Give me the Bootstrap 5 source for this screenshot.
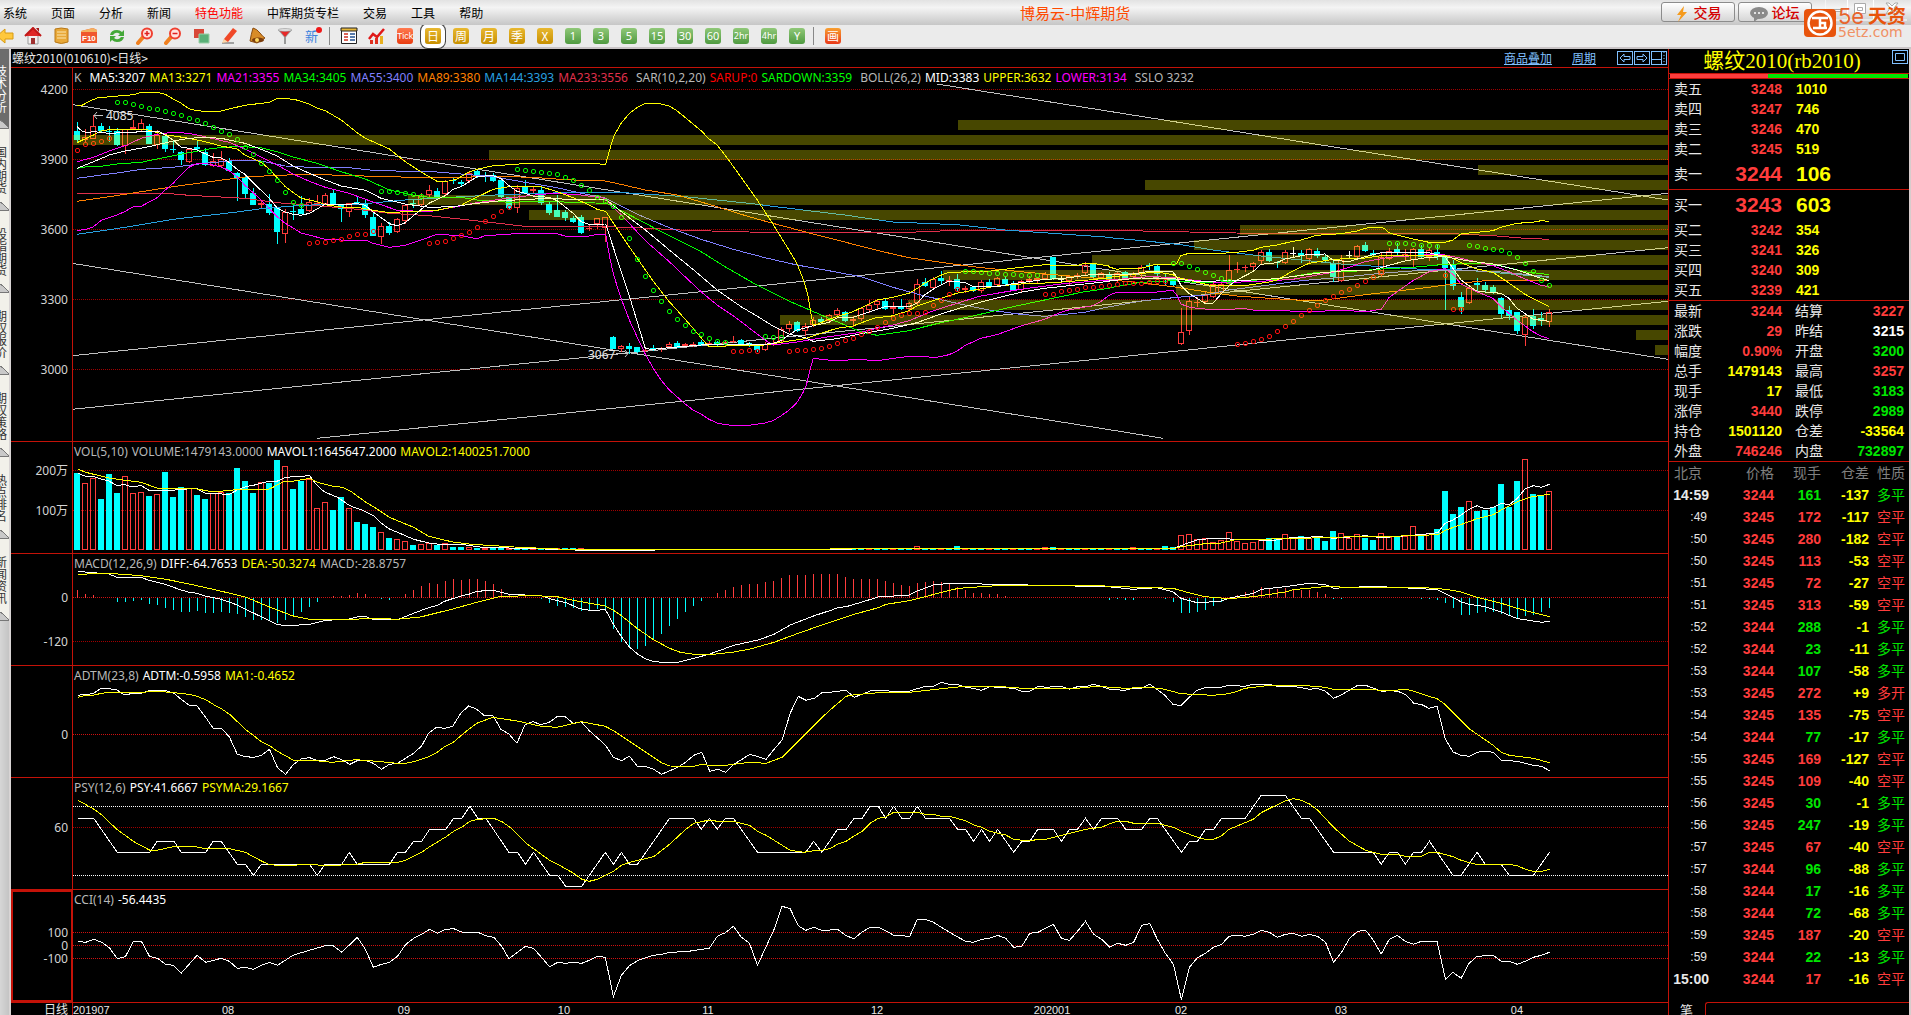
<!DOCTYPE html>
<html lang="zh-CN">
<head>
<meta charset="utf-8">
<meta name="viewport" content="width=device-width, initial-scale=1">
<title>博易云-中辉期货</title>
<link href="https://cdn.jsdelivr.net/npm/bootstrap@5.3.0/dist/css/bootstrap.min.css" rel="stylesheet">
<script src="https://cdn.jsdelivr.net/npm/bootstrap@5.3.0/dist/js/bootstrap.bundle.min.js"></script>
<style>
:root{--rule:#c41208;--up:#ff3c3c;--dn:#00e600;--cn:"Noto Sans CJK SC",sans-serif;--lat:"Noto Sans","Noto Sans CJK SC",sans-serif}
body{background:#000;color:#e8e8e8;font:12px/16px var(--cn);overflow:hidden}
button{font-family:inherit}
.menubar{height:25px;background:linear-gradient(#e2e2e2,#f4f4f4 30%,#e4e4e4 55%,#c6c6c6);color:#000;position:relative}
.menubar nav{gap:24px;padding-left:3px}
.menubar nav a{color:#000;text-decoration:none;line-height:26px;white-space:nowrap}
.menubar nav a.hot{color:#f00}
.app-name{left:1020px;top:2px;color:#ff4a00;font-size:15px;line-height:22px}
.cap-btn{width:74px;height:20px;border:1px solid #8c8c8c;border-radius:3px;background:linear-gradient(#fff,#d6d6d6);color:#d40000;font-size:14px;font-weight:500;line-height:18px;padding:0}
.cap-group{right:99px;top:2px;gap:3px}
.win-group{right:4px;top:0}
.brand{right:2px;top:0;z-index:3}
.toolrow{height:24px;background:#ebebeb;border-bottom:2px solid #c9c4c6}
.tool{width:28px;height:22px;flex:none;border:0;background:none;padding:0;display:flex;align-items:center;justify-content:center}
.tool:first-child{margin-left:-9px}
.tool svg{display:block}
.tool.picked .chip{box-shadow:0 0 0 4px #fff,0 0 0 5px #444}
.chip{width:16px;height:16px;border-radius:3px;color:#fff;font-size:12px;line-height:16px;text-align:center;white-space:nowrap}
.chip.gold{background:linear-gradient(#e8b830,#c89000)}
.chip.leaf{background:linear-gradient(#90c878,#4f9a40);font-family:var(--lat);font-size:11px}
.chip.fire{background:linear-gradient(#ff7a50,#e83c10);font:10px/16px "Liberation Sans",sans-serif}
.chip.tiny{font-size:9px}
.bar-sep{width:8px;height:18px;flex:none;background:linear-gradient(#888,#888) 2px 0/1px 100% no-repeat}
.side-tabs{width:11px;border-right:2px solid #d8d4d4;background:linear-gradient(90deg,#d6d6d6,#c4c4c4);overflow:hidden;flex:none}
.side-tabs button{display:block;width:9px;height:82px;border:0;border-bottom:1px solid #777;padding:0;background:#f2f1ea;color:#333;font-size:12px;line-height:12px;overflow:hidden;position:relative}
.side-tabs button span{display:block;width:12px;margin-left:-5px}
.side-tabs button.on{background:#6c6c6c;color:#fff;height:80px}
.side-tabs button::after{content:"";position:absolute;right:0;bottom:0;width:9px;height:8px;background:linear-gradient(42deg,#c9c9c9 48%,#777 49%,#777 56%,transparent 57%)}
.chart-head{height:18px;line-height:18px;padding-left:1px}
.chart-head a{color:#80c0ff}
.mini{width:16px;height:14px;border:1px solid #80c0ff;background:none;padding:0;display:flex;align-items:center;justify-content:center;margin-right:1px}
.panels{display:grid;grid-template-rows:374fr 112fr 112fr 112fr 112fr 113fr;min-height:0}
.pane{border-top:1px solid var(--rule);position:relative;min-height:0}
.axis{width:62px;height:100%;flex:none;border-right:1px solid var(--rule)}
.axis.sel{outline:2px solid var(--rule);outline-offset:-2px}
.pane svg{display:block;height:100%}
.axis svg{width:61px}
.plot{flex:1 1 0;min-width:0;width:0}
.legend-line{position:absolute;left:63px;top:1px;font:12px/18px var(--lat);gap:4px;white-space:nowrap;color:#b8b8b8}
.pad-l{margin-left:4px}
.pane svg text{font:12px var(--lat)}
.dates{height:13px;border-top:1px solid var(--rule);font:11px/15px "Liberation Sans","Noto Sans CJK SC",sans-serif;flex:none}
.dates .period{width:62px;border-right:1px solid var(--rule);text-align:right;padding-right:4px;font-size:12px;overflow:hidden}
.dates .track{position:relative;flex:1;overflow:hidden}
.dates .track span{position:absolute;top:0;transform:translateX(-50%)}
.dates .track span:first-child{transform:none}
.quote{width:243px;flex:none;border-left:1px solid var(--rule);border-right:2px solid #d8cccc;overflow:hidden}
.q-title{height:25px;line-height:24px;border-bottom:1px solid var(--rule);color:#ff0;font-size:21px;font-family:"Liberation Serif","Noto Sans CJK SC",serif;text-align:center;position:relative;padding-right:14px;white-space:nowrap}
.q-title button{position:absolute;right:1px;top:1px;width:16px;height:14px;border:1px solid #80c0ff;background:none;padding:0;display:flex;align-items:center;justify-content:center}
.force-bar{height:5px;border-bottom:1px solid var(--rule);padding:0 1px}
.force-bar i{display:block;height:4px}
.force-bar .buy{background:var(--up)}
.force-bar .sell{background:var(--dn)}
.grid-tb{width:100%;table-layout:fixed;border-collapse:collapse;font:bold 14px/20px "Liberation Sans","Noto Sans CJK SC",sans-serif;border-bottom:1px solid var(--rule)}
.grid-tb td,.grid-tb th{padding:0;height:20px;white-space:nowrap}
.grid-tb th{font-weight:400;padding-left:5px;color:#e8e8e8}
.grid-tb .big td{font-size:21px;line-height:30px;height:30px}
.grid-tb .qty{padding-left:14px}
.grid-tb .last{padding-right:5px}
.grid-tb th+td+th{padding-left:13px}
.ticks{border:0}
.ticks td,.ticks th{height:22px;line-height:22px;text-align:right}
.ticks thead th{color:#808080;padding:0}
.ticks .side{font-weight:400;padding-right:4px}
.ticks thead th.side{padding-right:4px}
.ticks .sec{font-weight:400;font-size:12px;padding-right:5px}
.ticks .full{padding-right:3px}
.u{color:var(--up)}.d{color:var(--dn)}.y{color:#ff0}.w{color:#fff}
.q-foot{height:13px;line-height:16px;font-size:13px}
.q-foot span{width:36px;padding-left:11px;overflow:hidden}
.q-foot i{flex:1;border-top:1px solid var(--rule);border-left:1px solid var(--rule);border-top-left-radius:3px}
</style>
</head>
<body class="vh-100 d-flex flex-column m-0">
<header class="menubar d-flex">
  <nav class="d-flex">
    <a href="#">系统</a><a href="#">页面</a><a href="#">分析</a><a href="#">新闻</a><a href="#" class="hot">特色功能</a><a href="#">中辉期货专栏</a><a href="#">交易</a><a href="#">工具</a><a href="#">帮助</a>
  </nav>
  <div class="app-name position-absolute">博易云-中辉期货</div>
  <div class="cap-group d-flex position-absolute">
    <button class="cap-btn"><svg width="16" height="16" viewBox="0 0 16 16"><path d="M10 0 3 9h4l-3 7 9-10H9z" fill="#f59a1c"/></svg> 交易</button>
    <button class="cap-btn"><svg width="18" height="16" viewBox="0 0 18 16"><ellipse cx="9" cy="7" rx="9" ry="6" fill="#8a8a8a"/><path d="M4 11v5l5-4z" fill="#8a8a8a"/><circle cx="5" cy="7" r="1" fill="#fff"/><circle cx="9" cy="7" r="1" fill="#fff"/><circle cx="13" cy="7" r="1" fill="#fff"/></svg> 论坛</button>
  </div>
  <svg class="win-group position-absolute" width="82" height="24" viewBox="0 0 82 24" fill="none" stroke="#aaa"><path d="M0 0v20h82M22.500 0v20M48.500 0v20" stroke="#fff"/><path d="M8 9.500h8v2H8z" fill="#fff"/><path d="M29.500 3.500h11v10h-11zM32.500 7.500h5v3h-5z" fill="#fff"/><path d="m61 3 4 5-4 6h3l3-4 3 4h3l-4-6 4-5h-3l-3 3-3-3z" fill="#fff"/></svg>
  <svg class="brand position-absolute" width="105" height="44" viewBox="0 0 105 44">
    <rect x="0" y="9" width="32" height="28" rx="4" fill="#e8540c"/>
    <circle cx="16" cy="23" r="11.500" fill="none" stroke="#fff" stroke-width="2.500"/>
    <path d="M8 18h16M16 18v10M9 28h14M16 23h5v5" fill="none" stroke="#fff" stroke-width="2.500"/>
    <text x="34" y="24" font-family="Inter,sans-serif" font-size="22" fill="#e8642c">5e</text>
    <text x="64" y="23" font-family="Noto Sans CJK SC,sans-serif" font-weight="700" font-size="19" fill="#e8540c">天资</text>
    <text x="34" y="37" font-family="DejaVu Sans,sans-serif" font-size="14" fill="#f09064">5etz.com</text>
  </svg>
</header>

<div class="toolrow d-flex align-items-center" id="tools"></div>

<main class="d-flex flex-fill" style="min-height:0">
  <div class="side-tabs">
    <button class="on"><span>技术分析</span></button><button><span>国内期货</span></button><button><span>股指期货</span></button><button><span>期权报价</span></button><button><span>期权策略</span></button><button><span>热点排名</span></button><button><span>新闻资讯</span></button>
  </div>

  <section class="d-flex flex-column flex-fill" style="min-width:0">
    <div class="chart-head d-flex align-items-center">
      <span class="me-auto">螺纹2010(010610)&lt;日线&gt;</span>
      <a href="#">商品叠加</a><a href="#" style="margin:0 21px 0 20px">周期</a>
      <button class="mini" aria-label="左"><svg width="12" height="10" fill="none" stroke="#80c0ff"><path d="M1 5l4-4v2.500h6v3H5V9z"/></svg></button>
      <button class="mini" aria-label="右"><svg width="12" height="10" fill="none" stroke="#80c0ff"><path d="M11 5L7 1v2.500H1v3h6V9z"/></svg></button>
      <button class="mini" aria-label="分割"><svg width="14" height="12" fill="none" stroke="#80c0ff"><path d="M0 7.500h9M9.500 0v12"/><path d="M12 0v12" stroke-dasharray="1 2"/></svg></button>
    </div>
    <div class="panels flex-fill" id="panels"></div>
    <div class="dates d-flex">
      <div class="period">日线</div>
      <div class="track" id="dates"></div>
    </div>
  </section>

  <aside class="quote d-flex flex-column">
    <div class="q-title">螺纹2010(rb2010)<button aria-label="窗口"><svg width="10" height="8"><path d="M.5.5h9v7h-9z" fill="none" stroke="#80c0ff"/></svg></button></div>
    <div class="force-bar d-flex"><i class="buy" style="width:41%"></i><i class="sell" style="width:59%"></i></div>
    <table class="grid-tb" id="asks"></table>
    <table class="grid-tb" id="bids"></table>
    <table class="grid-tb" id="stats"></table>
    <table class="grid-tb ticks mb-auto">
      <colgroup><col style="width:43px"><col style="width:62px"><col style="width:47px"><col style="width:48px"><col></colgroup>
      <thead><tr><th style="text-align:left;padding-left:5px">北京</th><th>价格</th><th>现手</th><th>仓差</th><th class="side">性质</th></tr></thead>
      <tbody id="ticks"></tbody>
    </table>
    <div class="q-foot d-flex"><span>笔</span><i></i></div>
  </aside>
</main>

<script>
/* ---------- toolbar ---------- */
const S=(b)=>`<svg width="18" height="18" viewBox="0 0 18 18">${b}</svg>`;
const chip=(c,t,x='')=>`<span class="chip ${c} ${x}">${t}</span>`;
const lens=(s)=>S(`<path d="M2 16 8 9" stroke="#f08020" stroke-width="4" stroke-linecap="round"/><circle cx="11" cy="6.500" r="5" fill="#ffe4e0" stroke="#f04030" stroke-width="2"/><path d="${s}" stroke="#e02020" stroke-width="1.500"/>`);
const tools=[
 ['后退',S('<path d="M1 9 9 2v4h8v6H9v4z" fill="#ffc83c" stroke="#d89a10"/>')],
 ['主页',S('<path d="M4 8h10v9H4z" fill="#f4f0f0" stroke="#999"/><path d="M1 9 9 1l8 8" fill="#e02828" stroke="#c01818" stroke-width="2"/><path d="M12 1h3v4z" fill="#a01818"/><path d="M7 11h4v6H7z" fill="#a03030"/>')],
 ['资料',S('<path d="M3 2q6-2 13 0v13q-7 3-13 0z" fill="#e8a838" stroke="#b87818"/><path d="M5 5h9M5 8h9M5 11h9" stroke="#fbe6b0"/>')],
 ['F10',S('<path d="M1 4 13 1l4 2v13H1z" fill="#f0562c"/><path d="M1 4 13 1l4 2v2H1z" fill="#f4b060"/><text x="2" y="14" font-size="8" font-weight="700" font-family="Liberation Sans" fill="#fff">F10</text>')],
 ['刷新',S('<path d="M2 8q1-5 7-5 3 0 5 2l2-2v6h-6l2-2q-4-3-7 1zM16 10q-1 5-7 5-3 0-5-2l-2 2V9h6l-2 2q4 3 7-1z" fill="#44a838"/>')],
 ['放大',lens('M8.500 6.500h5M11 4v5')],['缩小',lens('M8.500 6.500h5')],
 ['叠加',S('<path d="M2 2h10v9H2z" fill="#d84838"/><path d="M7 7h10v9H7z" fill="#5ab078" stroke="#9ad0a8"/>')],
 ['画线',S('<path d="M4 12 13 1l4 3-9 11-5 1z" fill="#f04828"/><path d="M2 16h12" stroke="#888" stroke-width="1.500"/><path d="M4 12 2 16l6-1z" fill="#fbd8a8"/>')],
 ['预警',S('<path d="M5 1q4 1 7 5t5 5l-8 5-7-2q1-6 3-13z" fill="#d88c28" stroke="#8a4c10"/><ellipse cx="10" cy="13" rx="6" ry="2.500" fill="#7a3c0c"/><circle cx="9" cy="13" r="2" fill="#ffd860"/>')],
 ['筛选',S('<path d="M2 3h14l-6 7v7H8v-7z" fill="#999"/><path d="M4 4h10l-5 6z" fill="#e82828"/><ellipse cx="9" cy="3" rx="7" ry="1.500" fill="#ddd" stroke="#888" stroke-width=".5"/>')],
 ['新',S('<text x="1" y="14" font-size="13" font-family="Noto Sans CJK SC" fill="#3c82dc">新</text><circle cx="15" cy="3" r="3" fill="#f01818"/>')],
 null,
 ['报价',S('<path d="M1.500 1.500h15v15h-15z" fill="#fff" stroke="#222"/><path d="M1 1h16v3H1z" fill="#e8b838" stroke="#222"/><path d="M4 7h4M4 10h4M4 13h4" stroke="#d03020" stroke-width="1.500"/><path d="M10 7h5M10 10h5M10 13h5" stroke="#205090" stroke-width="1.500"/>')],
 ['走势',S('<path d="M2 17v-4h3v4zM7 17v-6h3v6z" fill="#e03020"/><path d="M12 17V9h3v8z" fill="#e8b020"/><path d="m1 12 4-5 4 3 7-8" stroke="#e01818" stroke-width="2.500" fill="none"/>')],
 ['Tick',chip('fire','Tick','tiny')],['日',chip('gold','日'),1],['周',chip('gold','周')],['月',chip('gold','月')],['季',chip('gold','季')],['X',chip('gold','X')],
 ...['1','3','5','15','30','60'].map(t=>[t,chip('leaf',t)]),
 ['2hr',chip('leaf','2hr','tiny')],['4hr',chip('leaf','4hr','tiny')],['Y',chip('leaf','Y')],
 null,
 ['画',`<span class="chip" style="background:linear-gradient(#f8a030,#e83818)">画</span>`]];
document.getElementById('tools').innerHTML=tools.map(t=>t?`<button class="tool ${t[2]?'picked':''}" aria-label="${t[0]}">${t[1]}</button>`:'<span class="bar-sep"></span>').join('');

/* ---------- quotes ---------- */
const book=(rows,big)=>'<colgroup><col style="width:45px"><col style="width:68px"><col></colgroup>'+rows.map(([a,b,c],i)=>`<tr class="${i===big?'big':''}"><th scope="row">${a}</th><td class="text-end u">${b}</td><td class="qty y">${c}</td></tr>`).join('');
asks.innerHTML=book([['卖五',3248,1010],['卖四',3247,746],['卖三',3246,470],['卖二',3245,519],['卖一',3244,106]],4);
bids.innerHTML=book([['买一',3243,603],['买二',3242,354],['买三',3241,326],['买四',3240,309],['买五',3239,421]],0);
stats.innerHTML='<colgroup><col style="width:45px"><col style="width:68px"><col style="width:50px"><col></colgroup>'+[
['最新','3244','u','结算','3227','u'],['涨跌','29','u','昨结','3215','w'],['幅度','0.90%','u','开盘','3200','d'],['总手','1479143','y','最高','3257','u'],['现手','17','y','最低','3183','d'],['涨停','3440','u','跌停','2989','d'],['持仓','1501120','y','仓差','-33564','y'],['外盘','746246','u','内盘','732897','d']
].map(r=>`<tr><th scope="row">${r[0]}</th><td class="text-end ${r[2]}">${r[1]}</td><th scope="row">${r[3]}</th><td class="text-end last ${r[5]}">${r[4]}</td></tr>`).join('');
ticks.innerHTML=`14:59 3244 161 -137 多平|:49 3245 172 -117 空平|:50 3245 280 -182 空平|:50 3245 113 -53 空平|:51 3245 72 -27 空平|:51 3245 313 -59 空平|:52 3244 288 -1 多平|:52 3244 23 -11 多平|:53 3244 107 -58 多平|:53 3245 272 +9 多开|:54 3245 135 -75 空平|:54 3244 77 -17 多平|:55 3245 169 -127 空平|:55 3245 109 -40 空平|:56 3245 30 -1 多平|:56 3245 247 -19 多平|:57 3245 67 -40 空平|:57 3244 96 -88 多平|:58 3244 17 -16 多平|:58 3244 72 -68 多平|:59 3245 187 -20 空平|:59 3244 22 -13 多平|15:00 3244 17 -16 空平`.split('|').map(l=>{const [t,p,v,d,s]=l.split(' ');const c=s==='多平'?'d':'u';return `<tr><td class="${t[0]===':'?'sec':'full'}">${t}</td><td class="u">${p}</td><td class="${c}">${v}</td><td class="y">${d}</td><td class="side ${c}">${s}</td></tr>`}).join('');

/* ---------- chart data: curves are stored in tiles, each with its own origin and scale ---------- */
const T={a:[0,80,2.45,0,1483],b:[560,80,2.8,126,1538],c:[1110,80,2.8,0,9999],p:[0,430,1.8667,0,1545],q:[830,430,1.8667,0,9999],r:[0,770,1.8667,0,1545],s:[830,770,1.8667,0,9999]};
const curve=(col,segs)=>{let o=[];for(const k in segs){const [ox,oy,sx,lo,hi]=T[k];segs[k].split(' ').forEach(p=>{const [x,y]=p.split(',').map(Number);if(x>=lo&&x<=hi)o.push((ox+x/sx).toFixed(1)+','+(oy+y/3).toFixed(1))})}
 return `<polyline points="${o.join(' ')}" fill="none" stroke="${col}" shape-rendering="crispEdges"/>`};
const X=i=>77+8*i, Y=v=>Math.round(80+v/3), V=v=>Math.round(430+v/3);
const RED='#ff3c3c',CY='#00ffff';
const hline=(ys,c)=>ys.map(y=>`<path d="M73 ${y}.5H1668" stroke="${c}" stroke-dasharray="1 1" shape-rendering="crispEdges"/>`).join('');
const seg=(x1,y1,x2,y2)=>`<path d="M${x1} ${y1}L${x2} ${y2}" stroke="#c0c0c0" shape-rendering="crispEdges"/>`;

/* candle: kind(c/r/w) high bodyTop bodyBottom low */
const candles=`c126,152,180,190 r147,172,180,185 r105,138,177,177 c128,138,153,155 c137,154,156,185 c145,152,195,197 r146,146,197,222 r120,142,148,150 r117,130,150,152 c132,138,192,193 r150,166,196,208 c163,167,207,217 c181,207,209,220 c213,216,240,256 r205,208,245,248 c181,201,208,210 c204,215,254,258 r220,243,258,262 r213,236,258,262 c234,244,272,276 c276,280,294,363 c282,292,342,357 c323,338,374,374 r362,370,376,386 c343,372,400,404 c384,384,456,491 r388,395,461,489 c368,393,395,420 c348,387,402,403 r355,367,394,397 r345,369,373,374 r338,345,372,375 c330,339,375,376 c372,376,388,426 r368,370,395,411 c352,366,368,376 c358,369,405,414 c399,411,468,468 r430,439,470,492 c426,437,458,465 r415,418,455,458 r375,375,422,432 c360,368,370,385 r340,347,375,380 r315,330,345,352 c324,334,356,358 r300,303,343,345 c295,300,302,312 c300,307,311,321 r275,280,304,308 c268,274,287,293 c276,288,290,305 c280,286,302,305 c298,300,350,354 c350,352,385,390 r315,325,383,398 c300,320,340,343 r318,327,334,343 c320,330,369,375 c365,372,398,405 c345,390,411,412 c390,397,413,424 c408,415,425,428 c405,411,458,462 r435,443,446,453 r413,415,432,448 r410,412,443,485 c768,771,806,808 r796,799,806,815 c790,798,806,822 c800,801,815,818 r800,811,813,815 c796,805,808,812 r800,803,806,815 r786,793,802,805 c783,788,803,805 r789,791,799,802 r786,791,793,802 c781,786,795,797 r784,789,792,796 c782,787,795,797 r781,785,795,797 r768,782,784,790 c778,781,796,798 c785,789,797,800 c793,795,811,815 r787,793,811,812 r778,788,790,797 r740,748,783,785 r722,733,748,755 c723,727,752,755 r729,737,752,768 r712,720,735,740 c711,717,725,730 r703,706,722,730 r684,691,705,715 c693,697,722,727 r707,718,722,740 r680,685,718,722 r660,676,690,700 r656,664,676,690 c658,663,686,690 r667,682,686,702 c658,681,687,690 r667,670,688,695 r598,611,670,675 c595,606,617,622 r592,596,623,625 c573,594,603,614 r589,601,605,618 c583,598,628,632 r617,625,629,640 c618,622,633,637 r600,607,633,638 c597,605,617,622 r590,594,616,620 c591,597,613,615 c603,611,629,630 r600,604,629,637 r588,598,602,608 r590,595,599,608 r577,583,597,600 c530,532,597,600 w588,596,599,608 r585,589,604,615 r578,584,590,597 r545,554,578,587 c550,553,591,595 r575,580,593,598 c576,583,597,600 r575,578,600,605 c573,576,597,600 r575,582,590,598 r556,562,580,590 c549,556,559,570 c552,557,583,590 c583,595,597,615 c595,597,614,618 r685,757,791,795 r650,664,754,765 r652,665,669,680 r634,645,665,672 r608,612,650,655 r610,613,635,640 r525,571,612,615 r546,567,571,578 r555,562,564,575 r546,549,562,570 r511,517,543,555 c507,516,543,545 c542,546,550,563 r511,517,550,553 w502,519,522,530 c510,519,528,548 r504,508,538,548 c505,513,527,535 c525,532,540,545 c540,548,592,605 r525,540,604,605 w513,525,528,535 r495,499,532,535 c486,495,513,515 c510,520,525,530 r520,530,586,590 r505,514,536,540 c490,507,520,525 r507,521,530,540 r505,508,540,562 c495,507,530,535 r505,510,530,542 c493,515,530,540 c525,530,564,690 c540,555,618,630 c637,651,681,702 r618,625,670,672 c595,609,614,632 c605,615,630,635 c615,621,637,642 c650,654,702,714 c678,690,707,720 c695,697,752,762 r700,711,764,798 c687,708,738,747 c697,713,724,738 r687,697,727,740`.split(' ').map((s,i)=>{
 const [h,t,b,l]=s.slice(1).split(',').map(v=>Y(+v)),x=X(i),k=s[0],H=Math.max(1,b-t);
 if(k==='r'&&H>2)return `<path d="M${x}.5 ${h}V${t}M${x}.5 ${b}V${l}" stroke="${RED}"/><rect x="${x-3}.5" y="${t}.5" width="5" height="${H-1}" stroke="${RED}" fill="none"/>`;
 const c=k==='r'?RED:k==='w'?'#fff':CY;
 return `<path d="M${x}.5 ${h}V${l}" stroke="${c}"/><rect x="${x-3}" y="${t}" width="6" height="${H}" fill="${c}"/>`}).join('');

/* parabolic SAR: start index, colour, values */
const sar=`0r211 193 190 184 175|5g65 67 73 78 85 88 94 100 106 115 121 129 140 152 163 176 202 223 248 274 299 337 367 374|29r490 487 485 481 476 469 463 461 454|38g332 334 337 339 343 347|44r490 487 484 475 466 455 440 424 409 394 382|55g268 271 274 277 280 283 292 301 316 331 350 362 379 412 475 538 589 631 664 694 718 736 752 763 775 782 787|82r814 814 811 812|86g769 771 772|89r814 811 811 808 805 799 790 781 773 763 753 740 727 715 706 700 698 697 676 661 643 628|111g574 574 577 580 580 583 583 586 586 586|121r641 641 634 631 628 622 621 619 616 613 610 609 608 607 604 602|137g550 550 559 568 577 586 595 602|145r793 789 784 778 769 754 739 724 706 691 676 661 649 637 626 616 604 590 577|164g488 488 490 493 496 496 499|171r586 688 688|174g496 499 505 508 511 520 532 550 574 600 616`.split('|').map(s=>{
 const m=s.match(/^(\d+)([rg])(.*)$/);return m[3].split(' ').map((v,j)=>`<rect x="${X(+m[1]+j)-2}.5" y="${Y(+v)-2}.5" width="4" height="4" rx="1.500" fill="none" stroke="${m[2]==='r'?'#ff1010':'#00ff00'}"/>`).join('')}).join('');

const profile=[958,73,489,1478,1145,408,529,1240,1194,1092,943,1176,908,780,1636,1655].map((x,i)=>`<rect x="${x}" y="${120+15*i}" width="${1668-x}" height="10" fill="#ff0" fill-opacity=".28"/>`).join('');

const main=hline([89,159,229,299,369],'#a00000')
+seg(72,104.5,1668,359.3)+seg(72,263.3,1163,438.3)+seg(937,84,1668,200)+seg(72,355.7,1668,193.3)+seg(72,409.3,1668,247.7)+seg(317,438.3,1668,301.3)
+`<g shape-rendering="crispEdges">${candles}</g>`
+curve('#e0304c',{a:'189,340 405,340 463,346 600,355 679,368 758,375 875,388 954,400 1051,407 1149,420 1286,439 1482,439',b:'128,440 217,443 350,451 529,456 730,458 977,457 1111,451 1538,451',c:'0,451 221,456 445,461 960,461 1072,467 1162,475 1230,478'})
+curve('#28a0e0',{a:'189,463 268,449 346,434 424,418 502,407 581,396 640,386 718,378 797,373 875,373 993,360 1130,350 1247,343 1345,340 1384,336 1482,336',b:'150,336 350,350 529,370 618,382 797,405 932,426 1111,434 1245,450 1538,472',c:'0,473 109,484 198,494 288,510 423,528 535,540 647,552 759,560 871,568 960,568 1050,575 1230,592'})
+curve('#ff8000',{a:'189,364 268,350 346,335 424,320 502,307 600,291 679,286 758,283 836,286 914,289 1012,292 1130,292 1208,289 1306,292 1384,299 1482,303',b:'128,303 150,308 239,330 328,345 440,380 529,410 596,430 709,462 797,486 887,511 977,533 1066,547 1156,560 1290,575 1424,588 1538,598',c:'0,600 87,608 176,620 266,635 355,648 445,655 535,661 602,660 691,647 781,636 871,625 960,612 1050,602 1230,600'})
+curve('#8080ff',{a:'189,295 248,285 287,279 346,268 424,262 502,250 581,241 640,243 699,258 777,263 855,263 914,271 993,274 1071,276 1149,284 1208,290 1286,307 1365,323 1424,340 1482,353',b:'128,355 217,403 306,443 395,478 485,508 574,533 663,555 753,572 842,590 932,622 1021,648 1111,670 1200,690 1290,703 1357,709 1469,697 1530,682',c:'0,680 87,663 176,653 266,645 333,630 423,618 535,602 647,592 759,580 871,571 983,571 1095,576 1230,590'})
+curve('#00ff00',{a:'189,265 209,261 248,259 287,252 346,247 405,232 463,218 522,205 581,199 640,203 679,215 718,231 777,250 836,275 895,297 954,330 1012,345 1051,352 1130,352 1169,360 1247,367 1326,364 1404,367 1482,370',b:'128,368 195,405 284,455 395,515 462,560 551,615 641,663 753,715 842,755 887,766 977,752 1066,728 1156,708 1268,680 1357,660 1469,635 1538,625',c:'0,623 87,607 176,602 266,609 355,603 467,597 580,577 669,575 759,567 848,562 938,553 1050,550 1095,557 1162,575 1230,584'})
+curve('#ff00ff',{a:'189,245 229,232 268,213 307,197 346,175 385,163 424,157 463,160 502,170 561,187 600,207 640,232 679,255 718,282 758,304 797,322 855,340 914,366 973,391 1051,395 1110,382 1169,368 1247,354 1326,343 1365,340 1424,345 1482,355',b:'128,360 172,405 239,482 306,545 350,590 395,635 440,675 485,707 529,743 574,780 596,795 663,786 753,770 842,757 887,745 932,735 977,722 1044,693 1111,670 1178,648 1290,628 1402,612 1491,604 1538,600',c:'0,600 109,590 176,592 243,602 311,608 423,604 512,598 624,577 669,562 714,545 781,532 893,524 938,525 983,535 1072,557 1117,575 1162,597 1207,616 1230,620'})
+curve('#ffff00',{a:'189,188 209,176 229,165 248,152 268,149 360,149 405,164 463,175 502,185 542,198 581,207 600,225 640,247 660,268 699,320 738,355 777,365 797,374 836,381 875,382 914,391 954,398 993,395 1071,391 1110,381 1130,376 1149,363 1188,340 1208,328 1247,320 1326,320 1365,335 1404,353 1443,375 1463,388 1482,394',b:'128,394 150,430 195,502 262,605 306,665 350,717 417,800 485,797 574,795 641,783 686,776 709,768 775,745 820,738 865,720 887,712 922,710 977,692 999,678 1066,655 1111,640 1156,631 1223,618 1290,612 1380,608 1480,600 1538,593',c:'0,592 87,580 131,577 154,580 176,584 187,592 221,601 288,618 378,617 445,606 467,600 512,573 557,550 624,538 714,534 759,527 826,525 938,525 960,535 983,548 1027,567 1072,577 1117,609 1162,643 1230,680'})
+curve('#ffffff',{a:'189,265 229,245 268,225 307,213 365,200 424,183 463,175 502,172 542,175 600,190 640,208 679,228 718,258 758,280 797,300 836,318 895,331 934,355 993,372 1051,382 1110,380 1169,370 1228,362 1326,356 1424,358 1482,358',b:'128,358 172,395 239,450 306,510 372,568 440,630 507,680 551,708 596,738 641,762 686,773 709,784 775,776 865,757 932,745 999,728 1066,702 1133,680 1200,660 1290,637 1357,625 1469,612 1538,604',c:'0,602 87,594 176,596 243,604 355,602 467,596 580,580 647,573 736,570 781,556 826,543 893,532 938,530 1005,543 1072,552 1139,570 1207,595 1230,602'})
+curve('#ffffff',{a:'189,140 200,152 212,158 229,155 268,160 300,158 327,157 360,153 390,155 405,165 424,180 444,202 463,205 483,210 502,221 522,232 542,234 561,247 581,268 600,283 620,308 660,355 679,384 699,396 718,403 738,406 758,400 777,387 797,372 836,374 875,371 895,376 914,396 934,413 954,431 973,437 993,428 1012,408 1032,388 1051,370 1071,358 1091,347 1110,328 1130,320 1149,305 1169,290 1188,288 1208,287 1228,296 1247,317 1267,334 1286,340 1306,348 1345,352 1365,362 1384,380 1404,400 1424,425 1443,433 1482,432',b:'128,432 150,505 195,650 239,806 260,808 327,801 417,793 529,792 574,793 596,790 618,782 641,765 663,750 686,744 709,737 753,727 775,714 820,712 865,696 909,680 977,680 999,670 1021,645 1044,628 1066,615 1089,604 1133,607 1156,619 1223,620 1268,611 1313,605 1357,598 1402,596 1447,590 1491,583 1538,584',c:'0,584 64,582 109,574 154,574 176,576 187,590 198,615 221,640 266,670 288,670 311,642 333,618 355,600 400,575 423,553 467,548 490,537 557,523 602,522 624,540 669,545 714,530 759,518 803,517 893,518 938,530 960,565 983,600 1027,634 1095,640 1117,655 1139,684 1184,717 1230,724'})
+curve('#ffff00',{a:'189,76 201,76 219,64 238,54 270,50 327,44 346,37 385,37 405,43 424,57 444,70 463,86 483,92 502,94 530,94 542,93 561,87 600,76 620,73 660,67 679,55 699,56 720,58 738,64 758,72 777,84 797,92 836,120 875,158 895,175 954,207 993,245 1032,276 1071,304 1100,303 1120,297 1149,276 1169,268 1208,257 1265,253 1290,250 1443,250 1482,253',b:'128,252 139,210 150,170 172,128 195,100 217,82 239,70 280,71 306,78 327,92 350,112 395,152 417,176 440,195 462,225 507,292 551,358 596,432 641,510 663,550 680,595 693,640 700,685 709,736 720,733 753,718 775,710 820,695 842,684 887,660 932,652 977,640 999,626 1021,610 1066,586 1089,577 1200,574 1268,565 1357,554 1424,558 1447,557 1469,550 1491,550 1536,558',c:'0,562 20,568 42,565 87,565 131,552 176,555 187,550 198,527 221,520 311,520 355,517 400,511 423,502 467,495 512,484 535,480 579,466 647,461 691,453 714,445 736,442 759,442 770,447 781,458 803,465 848,477 893,487 938,487 960,480 983,461 1027,457 1072,452 1095,442 1139,430 1184,427 1207,422 1230,424'})
+curve('#ff00ff',{a:'189,451 209,449 229,440 248,421 287,405 307,394 327,380 346,379 385,353 405,330 424,310 444,284 463,262 483,250 510,252 542,261 561,272 581,290 600,316 640,360 679,410 699,430 738,459 797,478 836,480 895,480 914,490 954,502 993,496 1032,480 1071,463 1130,467 1169,476 1188,467 1265,461 1365,461 1384,468 1443,468 1463,463 1482,463',b:'128,463 139,530 150,585 172,658 195,722 217,773 239,823 261,865 283,900 306,930 345,967 372,990 395,1002 417,1018 440,1029 462,1034 485,1036 530,1036 574,1029 596,1022 618,1008 641,991 663,968 680,938 690,915 700,870 709,835 775,843 830,838 887,842 977,829 1055,832 1089,824 1111,814 1133,797 1178,775 1223,764 1290,738 1357,718 1402,697 1424,690 1491,677 1514,665 1536,647',c:'0,645 20,636 131,636 176,631 190,650 198,672 221,681 243,685 288,689 378,686 400,690 535,694 670,692 714,695 759,688 770,672 781,653 803,636 848,602 893,576 915,570 938,566 960,583 983,612 1027,635 1072,655 1095,680 1139,720 1184,755 1207,768 1230,776'})
+sar+profile
+'<path d="M94 115.500h9M97 112l-3 3.500 3 3.500M616 353.500h12M625 350l3 3.500-3 3.500" stroke="#c8c8c8" fill="none"/><text x="106" y="120" fill="#e8e8e8">4085</text><text x="588" y="359" fill="#e8e8e8">3067</text>';

/* volume bars: kind + top; the quiet stretch between is filled with stubs */
const volA='c129 r160 r143 c207 c132 c189 r139 r190 r187 c198 r193 c126 c201 c171 r175 c195 c207 r190 r185 c188 c114 c153 c189 r157 c159 c90 r109 c177 c153 r147 r235 r217 c240 c201 r235 c276 c282 c291 r307 c324 r328 r334 c345 r343 r340 c345 r340 c350 c350 r352 c354'.split(' ');
const volB='r316 r313 r328 r324 r337 r330 r307 r334 r340 r337 r330 c323 c328 r313 r325 c318 r325 c325 c333 c303 r310 r324 r313 c324 c330 r310 r320 c321 r318 r289 c315 r310 c297 c183 c252 c231 r214 c243 c240 c231 c162 c231 c153 r88 c192 c195 r184'.split(' ');
const mid={105:'r349',110:'c348',121:'r351',122:'c351',132:'r352',136:'c348',137:'c350'};
const vol=[];for(let i=0;i<185;i++)vol.push(i<51?volA[i]:i>137?volB[i-138]:mid[i]||((i%3?'c':'r')+(i<64?355:357)));
const volSvg=hline([470,510],'#a00000')+'<g shape-rendering="crispEdges">'+vol.map((s,i)=>{const t=V(+s.slice(1)),x=X(i);return s[0]==='c'?`<rect x="${x-3}" y="${t}" width="6" height="${550-t}" fill="${CY}"/>`:550-t<3?`<rect x="${x-3}" y="${t}" width="6" height="${550-t}" fill="${RED}"/>`:`<rect x="${x-2.5}" y="${t}.5" width="5" height="${549-t}" fill="none" stroke="${RED}"/>`}).join('')+'</g>'
+curve('#fff',{p:'145,129 158,138 173,139 188,147 203,153 218,166 233,164 248,171 263,166 278,181 320,181 355,176 368,176 383,190 428,193 443,180 458,170 473,166 503,153 518,153 533,142 578,137 590,163 605,185 630,202 653,227 675,240 697,257 712,280 727,297 742,307 772,328 800,339 820,343 860,343 900,352 1000,356 1090,361 1540,358',q:'0,359 60,356 400,356 640,356 655,347 670,338 685,330 715,325 760,328 800,330 820,333 860,323 915,320 940,325 1000,317 1030,323 1100,314 1135,308 1148,280 1163,270 1178,255 1193,238 1208,227 1223,237 1238,232 1253,220 1268,224 1283,205 1298,176 1313,167 1328,172 1343,163'})
+curve('#ff0',{p:'145,118 163,128 203,144 233,151 263,157 293,174 330,177 365,176 398,186 440,179 503,177 530,155 550,153 578,145 593,157 620,168 640,172 655,184 683,217 697,230 727,262 757,282 772,292 800,319 845,336 880,343 960,351 1070,359 1540,358',q:'0,357 640,356 655,350 700,341 730,339 760,328 800,328 900,324 1000,319 1030,320 1135,314 1150,300 1208,266 1238,254 1253,240 1283,215 1310,200 1343,193'});

const mac='480 492 495 503 503 516 516 513 510 522 525 534 540 546 546 543 549 549 546 549 552 561 570 570 573 580 570 560 546 531 516 503 499 499 495 489 492 503 507 510 503 492 480 468 459 462 453 447 450 447 447 453 462 477 492 497 499 503 506 519 528 531 535 543 543 537 543 597 636 651 657 648 630 612 588 567 546 528 513 503 489 480 471 465 462 462 456 453 444 435 435 435 432 432 432 432 441 447 447 447 447 453 459 465 468 459 456 453 456 459 471 480 489 489 492 492 498 505 505 505 505 505 505 505 505 505 505 505 505 510 507 510 510 503 503 503 507 516 549 549 546 540 528 516 507 495 486 480 471 475 477 475 477 480 480 486 492 507 507 505 505 505 505 505 505 505 505 505 507 507 510 519 534 555 555 549 546 546 552 555 564 558 555 546 534'.split(' ');
const macSvg=hline([597],'#d01010')+hline([641],'#a00000')+'<g shape-rendering="crispEdges">'+mac.map((v,i)=>`<path d="M${X(i)}.5 597.500V${V(+v)}" stroke="${v<502?RED:CY}"/>`).join('')+'</g>'
+curve('#fff',{p:'145,424 173,428 203,432 218,442 263,442 278,451 308,463 338,480 353,487 368,490 383,498 413,508 443,525 473,549 503,572 518,584 540,587 578,583 608,571 650,568 668,560 683,560 697,569 742,569 772,550 800,533 815,527 830,514 860,498 875,493 890,484 920,481 950,493 1010,497 1030,508 1060,520 1080,535 1100,541 1115,541 1130,538 1145,583 1160,620 1175,651 1190,672 1205,686 1220,695 1240,697 1265,697 1300,683 1325,672 1370,646 1415,630 1445,613 1475,585 1520,557 1545,544',q:'0,542 14,533 30,530 60,516 90,501 148,495 163,483 193,465 223,460 430,467 520,470 565,478 610,473 640,485 655,505 685,518 700,517 730,513 745,505 790,490 805,478 850,470 895,460 925,464 940,475 1013,469 1090,475 1133,479 1163,502 1178,516 1193,523 1223,530 1253,546 1283,566 1298,569 1328,577 1343,574'})
+curve('#ff0',{p:'145,433 203,430 263,437 310,448 353,462 398,478 458,501 503,531 545,557 578,568 640,569 700,565 742,568 785,561 845,537 890,517 935,499 1000,497 1040,500 1070,511 1130,528 1145,541 1160,557 1190,596 1220,629 1250,655 1270,667 1300,674 1325,674 1370,666 1400,657 1445,637 1490,610 1545,579',q:'0,577 45,553 90,533 105,523 148,512 178,500 208,487 240,475 310,467 500,467 540,470 640,475 670,488 700,500 745,506 790,500 850,486 865,479 930,469 960,472 1100,472 1150,478 1178,486 1208,502 1253,520 1283,535 1313,548 1343,560'});

const adtSvg=hline([734],'#d01010')
+curve('#fff',{p:'145,796 173,791 188,776 203,776 218,780 233,795 248,790 263,790 278,782 308,781 325,790 338,808 353,826 368,828 383,860 398,895 413,895 428,920 443,973 458,980 473,982 488,976 503,958 518,1013 533,1033 548,1003 563,986 578,983 593,992 608,990 623,980 638,989 653,1003 668,991 683,992 697,1000 712,1018 727,1003 742,1000 772,970 787,948 800,910 815,892 830,895 845,889 860,850 875,828 890,838 905,858 920,856 935,898 950,912 965,940 980,884 995,875 1010,884 1025,877 1040,860 1055,860 1070,880 1085,875 1100,902 1130,945 1145,982 1160,992 1175,979 1190,1009 1205,1009 1220,1018 1235,1033 1265,1012 1280,997 1295,976 1310,967 1325,1024 1340,1018 1355,1027 1370,1003 1400,973 1415,980 1430,988 1445,958 1460,930 1475,850 1490,799 1505,811 1520,805 1535,787',q:'0,787 30,781 45,802 60,793 75,783 100,781 120,785 148,784 163,776 178,769 193,769 208,757 223,763 238,763 253,772 268,775 283,781 298,770 343,775 358,784 373,784 388,769 403,772 432,769 447,778 462,770 477,770 492,763 507,769 522,778 550,781 565,775 582,775 597,763 610,778 625,796 640,823 655,827 670,803 685,781 700,773 730,772 745,766 775,769 790,763 820,763 835,769 865,769 895,778 910,775 925,784 940,805 955,794 985,766 1000,766 1030,784 1045,782 1060,784 1075,794 1090,820 1105,824 1118,835 1133,829 1148,925 1163,966 1178,976 1193,979 1208,967 1223,964 1238,967 1253,991 1283,994 1313,1006 1328,1009 1343,1022'})
+curve('#ff0',{p:'145,802 160,796 173,796 190,790 205,787 263,787 293,784 325,788 353,793 368,799 385,810 400,825 415,838 430,855 458,898 488,935 503,947 518,964 548,991 590,992 620,997 665,989 712,995 740,1000 757,1000 772,995 800,980 815,968 830,950 845,938 875,898 890,880 920,862 965,873 1010,889 1040,892 1085,875 1130,889 1145,902 1175,934 1235,998 1250,1008 1295,1009 1310,1003 1325,1006 1355,1006 1400,997 1430,1000 1460,982 1475,958 1535,862',q:'0,840 30,799 45,794 100,787 148,787 208,776 253,769 310,769 360,775 460,775 500,769 550,775 597,772 625,778 655,791 715,796 745,791 760,784 775,775 820,766 880,766 925,772 940,778 1055,781 1075,778 1090,784 1118,799 1133,806 1148,823 1193,896 1238,946 1253,967 1268,976 1313,985 1343,998'});

const psySvg=hline([827],'#a00000')+hline([806,875],'#fff')
+curve('#fff',{r:'145,145 175,145 219,247 280,247 293,214 325,214 338,247 384,247 398,214 413,214 443,283 458,283 473,316 488,283 578,283 592,316 607,283 638,283 652,247 667,283 727,283 742,247 757,247 772,214 787,214 802,178 832,178 847,145 862,145 877,109 892,145 907,145 950,247 966,247 981,283 996,247 1026,316 1041,316 1056,349 1086,349 1130,247 1145,283 1160,247 1175,283 1190,283 1220,214 1250,145 1295,145 1309,178 1324,145 1339,178 1354,145 1369,145 1414,247 1504,247 1519,214 1534,247',s:'0,212 14,178 30,178 45,145 60,145 75,109 90,109 104,145 119,109 134,145 149,145 163,109 178,145 223,145 238,178 253,178 268,214 283,178 298,214 313,178 343,247 358,214 373,214 388,178 417,178 432,214 447,178 462,178 477,145 492,178 507,145 537,145 552,178 582,178 597,145 611,145 656,247 671,214 686,214 701,178 716,178 731,145 775,145 805,76 850,76 880,145 895,145 940,247 1014,247 1029,283 1044,247 1059,247 1074,283 1089,247 1104,247 1119,214 1163,316 1178,316 1208,247 1223,283 1253,283 1268,316 1313,316 1343,247'})
+curve('#ff0',{r:'145,91 173,115 190,135 218,178 250,215 280,241 293,241 323,230 365,230 384,236 428,236 458,247 488,273 503,284 530,287 578,283 610,287 665,283 683,277 742,277 757,271 787,247 802,230 832,201 847,184 862,172 877,154 892,148 922,145 937,155 952,172 980,217 996,236 1026,271 1041,283 1071,310 1086,328 1100,334 1115,328 1145,304 1160,286 1175,277 1220,260 1250,223 1280,178 1295,160 1324,150 1339,154 1369,154 1399,166 1414,184 1430,196 1475,241 1500,247 1520,242 1534,241',s:'0,236 14,223 30,214 45,198 60,184 75,160 90,145 104,141 119,127 163,127 178,133 193,133 208,139 223,139 253,152 268,165 283,172 298,184 328,195 343,208 373,213 388,208 403,208 477,178 507,172 522,161 537,154 552,154 567,160 610,160 641,172 656,184 686,202 701,208 716,208 731,197 745,178 790,148 805,128 850,92 865,86 880,91 895,102 910,120 940,172 970,214 1000,241 1029,253 1059,253 1074,259 1104,259 1119,247 1133,247 1163,260 1178,271 1208,284 1268,283 1283,287 1298,298 1313,304 1328,304 1343,298'});

const cciSvg=hline([932,945,958],'#d01010')
+curve('#fff',{r:'145,514 160,517 175,508 190,517 204,533 219,566 234,560 249,514 264,514 279,559 294,565 309,583 323,586 338,610 368,556 384,577 413,565 428,574 443,595 458,592 473,598 488,586 503,577 518,586 547,556 577,541 607,527 622,527 638,547 667,502 682,538 697,592 712,583 727,577 742,559 757,524 772,505 787,493 802,478 817,490 832,478 847,476 862,486 892,487 907,497 922,502 937,530 950,566 981,529 996,535 1026,590 1041,577 1056,580 1071,577 1086,580 1100,571 1115,559 1130,562 1145,680 1160,616 1175,587 1190,572 1205,563 1220,556 1235,553 1250,547 1280,545 1324,535 1339,499 1354,488 1369,469 1384,502 1399,520 1414,586 1445,478 1460,409 1475,416 1490,467 1504,481 1519,472 1534,481',s:'0,480 14,478 30,497 45,506 60,486 75,472 90,472 104,482 119,496 149,499 163,448 178,448 193,457 223,487 253,514 268,517 283,508 298,505 313,496 328,505 343,532 358,529 373,490 388,487 417,463 432,505 447,511 462,484 477,454 492,493 507,508 522,532 537,520 552,526 567,517 582,466 597,461 611,508 626,550 641,583 656,689 671,592 686,563 701,550 716,532 731,523 745,499 760,496 775,499 790,493 805,481 820,487 835,502 850,493 865,490 880,499 895,493 910,499 925,517 940,577 955,547 970,505 985,484 1000,481 1014,510 1029,552 1044,508 1059,496 1074,514 1089,523 1104,514 1133,514 1149,628 1163,607 1178,625 1193,580 1208,559 1238,556 1253,574 1268,574 1283,583 1298,574 1313,562 1328,556 1343,547'});

/* ---------- panes: top, height, axis labels, legend, drawing ---------- */
const G='#b8b8b8',W='#fff',YL='#ff0';
const panes=[
 [68,373,[[89,4200],[159,3900],[229,3600],[299,3300],[369,3000]],[['K',G],['MA5:3207',W,1],['MA13:3271',YL],['MA21:3355','#f0f'],['MA34:3405','#0f0'],['MA55:3400','#8080ff'],['MA89:3380','#ff8000'],['MA144:3393','#28a0e0'],['MA233:3556','#e0304c'],['SAR(10,2,20)',G,1],['SARUP:0','#f00'],['SARDOWN:3359','#0f0'],['BOLL(26,2)',G,1],['MID:3383',W],['UPPER:3632',YL],['LOWER:3134','#f0f'],['SSLO 3232',G,1]],main],
 [442,111,[[470,'200万'],[510,'100万']],[['VOL(5,10)',G],['VOLUME:1479143.0000',G],['MAVOL1:1645647.2000',W],['MAVOL2:1400251.7000',YL]],volSvg],
 [554,111,[[597,0],[641,-120]],[['MACD(12,26,9)',G],['DIFF:-64.7653',W],['DEA:-50.3274',YL],['MACD:-28.8757',G]],macSvg],
 [666,111,[[734,0]],[['ADTM(23,8)',G],['ADTM:-0.5958',W],['MA1:-0.4652',YL]],adtSvg],
 [778,111,[[827,60]],[['PSY(12,6)',G],['PSY:41.6667',W],['PSYMA:29.1667',YL]],psySvg],
 [890,112,[[932,100],[945,0],[958,-100]],[['CCI(14)',G],['-56.4435',W]],cciSvg]];
document.getElementById('panels').innerHTML=panes.map(([y,h,ax,lg,body],i)=>`<div class="pane d-flex"><div class="axis ${i===5?'sel':''}"><svg viewBox="11 ${y} 61 ${h}" preserveAspectRatio="none">${ax.map(([v,t])=>`<text x="68" y="${v+5}" text-anchor="end" fill="#d4d4d4">${t}</text>`).join('')}</svg></div><svg class="plot" viewBox="73 ${y} 1595 ${h}" preserveAspectRatio="none">${body}</svg><div class="legend-line d-flex">${lg.map(([t,c,p])=>`<span ${p?'class="pad-l"':''} style="color:${c}">${t}</span>`).join('')}</div></div>`).join('');

document.getElementById('dates').innerHTML=[['201907',73],['08',228],['09',404],['10',564],['11',708],['12',877],['202001',1052],['02',1181],['03',1341],['04',1517]].map(([t,x])=>`<span style="left:${((x-73)/15.95).toFixed(2)}%">${t}</span>`).join('');
</script>
</body>
</html>
